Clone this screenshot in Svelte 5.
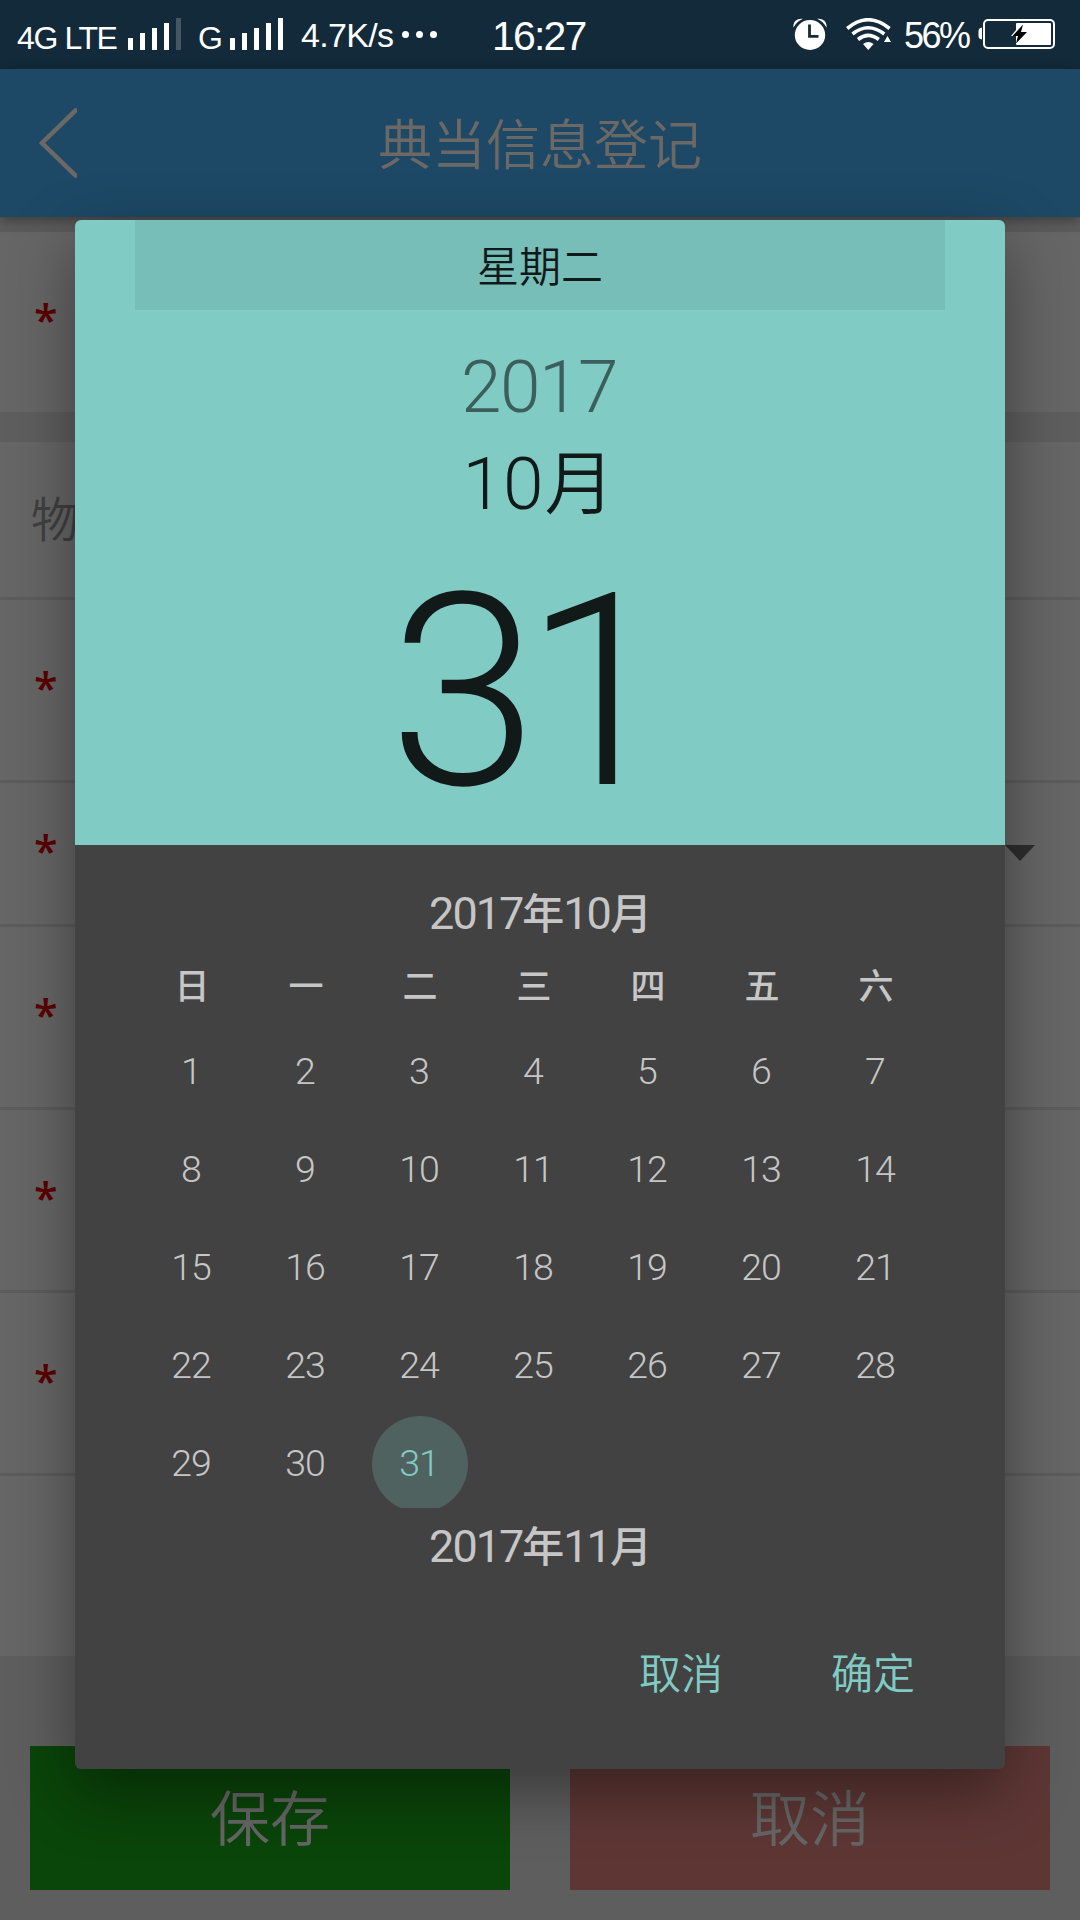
<script>
  const weekdays = ['日', '一', '二', '三', '四', '五', '六'];
  const days = Array.from({ length: 31 }, (_, i) => i + 1);
  const selected = 31;
  const bars = [12, 17, 22, 27, 32];
  const rows = [
    { size: 'tall', mark: true },
    { size: 'short', mark: true, select: true },
    { size: 'tall', mark: true },
    { size: 'tall', mark: true },
    { size: 'tall', mark: true },
    { size: 'last', mark: false }
  ];
</script>

<div class="screen">
  <div class="status">
    <span class="net lte">4G LTE</span>
    <div class="signal">
      {#each bars as h, i}
        <i class:dim={i === 4} style="height:{h}px"></i>
      {/each}
    </div>
    <span class="net g">G</span>
    <div class="signal second">
      {#each bars as h}
        <i style="height:{h}px"></i>
      {/each}
    </div>
    <span class="speed">4.7K/s</span>
    <div class="dots"><b></b><b></b><b></b></div>
    <span class="time">16:27</span>
    <svg class="alarm" width="34" height="32" viewBox="0 0 34 32">
      <ellipse cx="17" cy="17" rx="15.2" ry="15" fill="#fff" />
      <path d="M.5 9.5C-.2 3.500 4 0 10 .8 6 2.500 3 5 .5 9.500ZM33.500 9.500C34.200 3.500 30 0 24 .8 28 2.500 31 5 33.500 9.500Z" fill="#fff" />
      <path d="M16.500 6.500V18.300H25.500" fill="none" stroke="#122a39" stroke-width="2.800" />
    </svg>
    <svg class="wifi" width="46" height="32" viewBox="0 0 46 32">
      <g fill="none" stroke="#fff" stroke-width="3.600">
        <path d="M1.200 10.500Q22 -7 43.600 10.500" />
        <path d="M6.500 16Q22 3.500 38.300 16" />
        <path d="M12 21.500Q22 13.300 32.800 21.500" />
      </g>
      <path d="M17 26Q22.300 21.800 27.600 26L22.300 32ZM38 24H45L41.500 18Z" fill="#fff" />
    </svg>
    <span class="percent">56%</span>
    <svg class="battery" width="78" height="32" viewBox="0 0 78 32">
      <path d="M4 9.500Q.5 10 .5 13V18Q.5 21 4 21.500Z" fill="#fff" />
      <rect x="6" y="2" width="70" height="28" rx="4" fill="none" stroke="#fff" stroke-width="2" />
      <rect x="38" y="5" width="35" height="22" rx="1" fill="#fff" />
      <path d="M38 12L33 18H38Z" fill="#fff" />
      <path d="M45 6.500L34.500 18H40L38 25.500 49 14H43Z" fill="#000" />
    </svg>
  </div>

  <header>
    <svg class="back" width="38" height="70" viewBox="0 0 38 70">
      <path d="M38 1L3 35 38 69" fill="none" stroke="#6b6866" stroke-width="4.500" />
    </svg>
    <h1>典当信息登记</h1>
  </header>

  <main>
    <section class="first">
      <div class="row tall"><em>*</em></div>
    </section>
    <section class="form">
      <div class="row heading">物</div>
      {#each rows as row}
        <div class="row {row.size}">
          {#if row.mark}<em>*</em>{/if}
          {#if row.select}
            <svg class="caret" width="30" height="16" viewBox="0 0 30 16"><path d="M0 0H30L15 16Z" fill="#2e2e2e" /></svg>
          {/if}
        </div>
      {/each}
    </section>
    <div class="actions">
      <div class="save">保存</div>
      <div class="cancel">取消</div>
    </div>
  </main>

  <div class="dialog">
    <div class="hero">
      <div class="weekday">星期二</div>
      <div class="year">2017</div>
      <div class="month">10<span>月</span></div>
      <div class="day">31</div>
    </div>
    <div class="title">2017<span>年</span>10<span>月</span></div>
    <div class="week">
      {#each weekdays as w}<span>{w}</span>{/each}
    </div>
    <div class="grid">
      {#each days as d}
        <div class="cell">
          <span class:selected={d === selected}>{d}</span>
        </div>
      {/each}
    </div>
    <div class="title next">2017<span>年</span>11<span>月</span></div>
    <footer>
      <span>取消</span>
      <span>确定</span>
    </footer>
  </div>
</div>

<style>
  :global(body) { margin: 0; background: #5e5e5e; }
  .screen {
    position: relative;
    width: 1080px;
    height: 1920px;
    overflow: hidden;
    display: flex;
    flex-direction: column;
    font-family: Roboto, 'Noto Sans CJK SC', sans-serif;
    font-weight: 350;
    background: #5e5e5e;
  }
  .status {
    height: 69px;
    flex: none;
    display: flex;
    align-items: flex-start;
    background: #122a39;
    color: #fff;
    font-family: 'Liberation Sans', sans-serif;
    font-weight: 400;
    white-space: nowrap;
    box-sizing: border-box;
    padding-left: 17px;
  }
  .status > * { flex: none; }
  .net { font-size: 32px; line-height: 36px; margin-top: 20px; letter-spacing: -1.4px; }
  .lte { width: 111px; }
  .g { width: 32px; margin-left: 17px; }
  .signal { display: flex; gap: 7px; align-items: flex-end; height: 32px; margin-top: 18px; }
  .signal i { width: 5px; background: #fff; }
  .signal i.dim { background: #465764; }
  .speed { width: 100px; margin-left: 18px; margin-top: 16px; font-size: 34px; line-height: 39px; letter-spacing: -0.7px; }
  .dots { display: flex; gap: 7px; margin-top: 31px; margin-left: 1px; width: 35px; }
  .dots b { width: 7px; height: 7px; border-radius: 50%; background: #fff; }
  .time { width: 109px; margin-left: 55px; margin-top: 13px; font-size: 41px; line-height: 47px; letter-spacing: -1.8px; }
  .alarm { margin-left: 192px; margin-top: 18px; }
  .wifi { margin-left: 19px; margin-top: 18px; }
  .percent { width: 74px; margin-left: 12px; margin-top: 16px; font-size: 36px; line-height: 40px; letter-spacing: -2.5px; }
  .battery { margin-top: 18px; }

  header {
    position: relative;
    z-index: 1;
    flex: none;
    height: 148px;
    background: #1d4966;
    box-shadow: 0 4px 12px rgba(0, 0, 0, 0.35);
    display: grid;
    grid-template-columns: 77px 1fr 77px;
    align-items: center;
  }
  .back { justify-self: end; }
  h1 {
    margin: 0;
    padding-top: 7px;
    font-size: 54px;
    font-weight: 350;
    line-height: 80px;
    text-align: center;
    color: #6b6866;
  }

  main { flex: 1; display: flex; flex-direction: column; }
  .first { margin-top: 12px; border-top: 3px solid #5c5c5c; background: #666; }
  .first .row { border: 0; }
  .form { margin-top: 30px; background: #666; }
  .row {
    display: flex;
    align-items: center;
    justify-content: space-between;
    box-sizing: border-box;
    padding: 0 45px 0 34px;
    border-bottom: 3px solid #5c5c5c;
    height: 183px;
  }
  .first .row { height: 180px; }
  .row.heading { height: 158px; padding: 0 0 7px 31px; font-size: 48px; color: #404040; }
  .row.short { height: 144px; }
  .row.last { height: 180px; border: 0; }
  .caret { margin-bottom: 2px; }
  em {
    padding-bottom: 5px;
    font: 600 43px/48px 'Open Sans', sans-serif;
    color: #5c0000;
  }
  .actions {
    margin-top: 90px;
    padding: 0 30px;
    display: grid;
    grid-template-columns: 1fr 1fr;
    gap: 60px;
    font-size: 60px;
    text-align: center;
    color: #666;
  }
  .actions div { padding-top: 5px; line-height: 139px; }
  .save { background: #0a4509; }
  .cancel { background: #5e3735; }

  .dialog {
    position: absolute;
    z-index: 2;
    left: 75px;
    top: 220px;
    width: 930px;
    height: 1549px;
    border-radius: 6px;
    overflow: hidden;
    background: #424242;
    color: #c6c6c6;
    box-shadow: 0 22px 64px rgba(0, 0, 0, 0.4);
  }
  .hero {
    height: 625px;
    display: flex;
    flex-direction: column;
    align-items: center;
    background: #80cbc4;
    color: #111a19;
  }
  .weekday {
    box-sizing: border-box;
    width: 810px;
    height: 90px;
    padding-top: 5px;
    line-height: 85px;
    background: #78beb8;
    font-size: 42px;
    text-align: center;
  }
  .year { margin-top: 32px; padding-right: 2px; font-size: 73px; line-height: 90px; color: #3c5f5c; letter-spacing: -1.5px; font-weight: 300; }
  .month { margin-top: 7px; padding-right: 3px; font-size: 73px; line-height: 90px; letter-spacing: 0; font-weight: 350; }
  .month span { font-size: 70px; margin-left: 1px; }
  .day { margin-top: 7px; padding-right: 32px; font-size: 269px; line-height: 310px; letter-spacing: -14px; font-weight: 350; }
  .title {
    height: 60px;
    margin-top: 39px;
    line-height: 60px;
    text-align: center;
    font-size: 45px;
    font-weight: 400;
    letter-spacing: -2px;
  }
  .title span { font-size: 42px; font-weight: 500; letter-spacing: -1px; }
  .week, .grid {
    display: grid;
    grid-template-columns: repeat(7, 114px);
    margin-left: 60px;
    text-align: center;
  }
  .week { margin-top: 19px; font-size: 35px; line-height: 50px; font-weight: 500; }
  .grid { margin-top: 10px; grid-auto-rows: 98px; height: 485px; overflow: hidden; font-weight: 300; }
  .cell { display: grid; place-items: center; }
  .cell span { box-sizing: border-box; width: 96px; height: 96px; padding-right: 2px; border-radius: 50%; font-size: 37.500px; line-height: 95px; letter-spacing: -1px; }
  .cell .selected { background: #506260; color: #80cbc4; }
  .title.next { margin-top: 9px; }
  footer {
    display: flex;
    justify-content: flex-end;
    gap: 108px;
    padding-right: 90px;
    margin-top: 68px;
    font-size: 42px;
    line-height: 60px;
    color: #80cbc4;
  }
</style>
